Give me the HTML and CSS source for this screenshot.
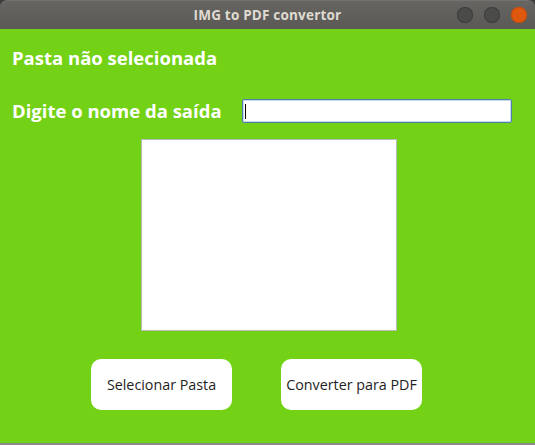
FILE: index.html
```html
<!DOCTYPE html>
<html lang="pt">
<head>
<meta charset="utf-8">
<title>IMG to PDF convertor</title>
<link rel="stylesheet" href="styles.css">
</head>
<body>
<div class="window">
  <header class="titlebar">
    <span class="title">IMG to PDF convertor</span>
    <div class="controls">
      <span class="dot"></span>
      <span class="dot"></span>
      <span class="dot close"></span>
    </div>
  </header>
  <main class="content">
    <div class="status">Pasta não selecionada</div>
    <div class="row">
      <label class="label" for="out">Digite o nome da saída</label>
      <div class="input"><span class="caret"></span></div>
    </div>
    <div class="preview"></div>
    <div class="buttons">
      <button class="btn">Selecionar Pasta</button>
      <button class="btn">Converter para PDF</button>
    </div>
  </main>
</div>
</body>
</html>
```

FILE: styles.css
```css
html, body {
  margin: 0;
  padding: 0;
  background: #3c3c3c;
}
.window {
  width: 535px;
  height: 445px;
  display: flex;
  flex-direction: column;
  font-family: "Open Sans", "DejaVu Sans", sans-serif;
  overflow: hidden;
}
.titlebar {
  height: 29px;
  flex: none;
  position: relative;
  display: flex;
  align-items: center;
  justify-content: center;
  background: linear-gradient(#666561, #5a5955);
  border-radius: 7px 7px 0 0;
  border-top: 1px solid #737270;
  box-sizing: border-box;
}
.title {
  color: #dfdbd2;
  font-weight: bold;
  font-size: 13.5px;
  letter-spacing: 0.2px;
}
.controls {
  position: absolute;
  right: 8px;
  top: 6px;
  display: flex;
  gap: 11px;
}
.dot {
  width: 16px;
  height: 16px;
  border-radius: 50%;
  background: #4b4b4a;
  box-shadow: inset 0 0 0 1px #3e3e3d;
}
.dot.close {
  background: #e0580d;
  box-shadow: inset 0 0 0 1px #c44d0b;
}
.content {
  flex: 1;
  background: #73d216;
  border-bottom: 2px solid #8a8a8a;
  padding: 0 0 0 12px;
  display: flex;
  flex-direction: column;
}
.status, .label {
  color: #ffffff;
  font-weight: bold;
  font-size: 18.5px;
}
.status {
  margin-top: 17px;
  line-height: 24px;
}
.row {
  margin-top: 29px;
  display: flex;
  align-items: center;
  height: 24px;
}
.label {
  width: 230px;
  line-height: 24px;
}
.input {
  width: 266px;
  height: 22px;
  background: #fff;
  border: 1px solid #4d7fae;
  border-radius: 2px;
  box-shadow: inset 0 0 0 1px #c7d9ea;
  display: flex;
  align-items: center;
  padding-left: 2px;
}
.caret {
  width: 1px;
  height: 15px;
  background: #000;
}
.preview {
  margin: 16px 0 0 129px;
  width: 254px;
  height: 190px;
  background: #fff;
  border: 1px solid #b9b9b9;
}
.buttons {
  margin: 28px 0 0 79px;
  display: flex;
  gap: 49px;
}
.btn {
  width: 141px;
  height: 51px;
  border: none;
  border-radius: 10px;
  background: #fff;
  color: #1e1e1e;
  font-family: "Open Sans", "DejaVu Sans", sans-serif;
  font-size: 14.3px;
  padding: 0;
}
```
